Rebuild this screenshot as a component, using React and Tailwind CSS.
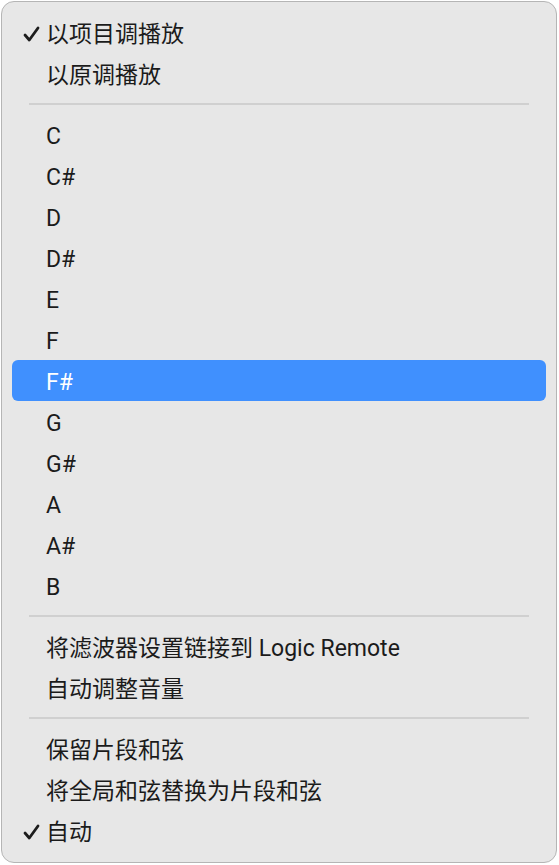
import React from "react";

const Check = () => (
  <svg className="absolute left-[11px] top-1/2 -translate-y-1/2 mt-[1px]" width="17" height="17" viewBox="0 0 17 17" fill="none">
    <path d="M2 9.5 L6.3 14.5 L15 2.5" stroke="#1d1d1d" strokeWidth="2.8" strokeLinecap="round" strokeLinejoin="round" />
  </svg>
);

const Item = ({ label, checked, active }) => (
  <div
    className={
      "relative h-[41px] flex items-center pt-[3px] pl-[34px] mx-[10px] rounded-[6px] text-[23px] leading-none " +
      (active ? "bg-[#4090fe] text-white" : "text-[#1b1b1b]")
    }
  >
    {checked && <Check />}
    <span>{label}</span>
  </div>
);

const Sep = () => (
  <div className="h-[20px] flex items-center px-[27px]">
    <div className="h-[2px] w-full bg-[#d0d0d0]" />
  </div>
);

export default function App() {
  const notes = ["C", "C#", "D", "D#", "E", "F", "F#", "G", "G#", "A", "A#", "B"];
  return (
    <div
      className="w-[559px] h-[865px] bg-white pt-px pl-px"
      style={{ fontFamily: 'Roboto, "Noto Sans CJK SC", "Noto Sans", sans-serif' }}
    >
      <div className="w-[556px] h-[862px] rounded-[13px] border-[1.5px] border-[#b5b5b5] bg-[#e7e7e7] pt-[10px] pb-[10px] overflow-hidden">
        <Item label="以项目调播放" checked />
        <Item label="以原调播放" />
        <Sep />
        {notes.map((n) => (
          <Item key={n} label={n} active={n === "F#"} />
        ))}
        <Sep />
        <Item label="将滤波器设置链接到 Logic Remote" />
        <Item label="自动调整音量" />
        <Sep />
        <Item label="保留片段和弦" />
        <Item label="将全局和弦替换为片段和弦" />
        <Item label="自动" checked />
      </div>
    </div>
  );
}
